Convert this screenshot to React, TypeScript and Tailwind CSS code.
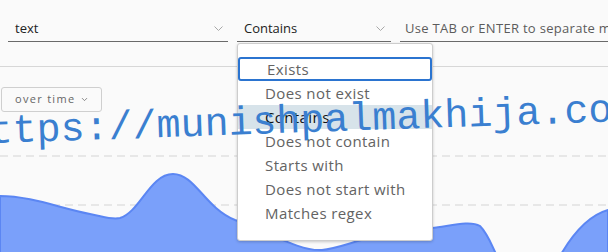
import { ChevronDown } from 'lucide-react';

const options = [
  'Exists',
  'Does not exist',
  'Contains',
  'Does not contain',
  'Starts with',
  'Does not start with',
  'Matches regex',
];

function Caret() {
  return (
    <svg width="9" height="5" viewBox="0 0 9 5" className="shrink-0">
      <path d="M0.5 0.5 L4.5 4.5 L8.5 0.5" fill="none" stroke="#a8a8a8" strokeWidth="1" />
    </svg>
  );
}

function Chart() {
  return (
    <svg width="608" height="140" viewBox="0 0 608 140" className="block">
      <line x1="0" y1="44" x2="608" y2="44" stroke="#d4d4d4" strokeWidth="1" strokeDasharray="8 5" />
      <line x1="0" y1="93" x2="608" y2="93" stroke="#d4d4d4" strokeWidth="1" strokeDasharray="8 5" />
      <path
        d="M0,84 C30,84 60,96 90,102 C105,105 112,108 120,106 C140,100 150,62 173,62 C195,62 205,96 235,108 C265,118 300,140 322,138 C345,136 370,120 432,116 C450,114 470,108 480,114 C488,122 492,134 497,144 L560,144 C575,118 590,103 608,98 L608,150 L0,150 Z"
        fill="#7aa0fa"
        stroke="#5b86f3"
        strokeWidth="2"
      />
    </svg>
  );
}

export default function App() {
  return (
    <div className="relative w-[608px] h-[252px] overflow-hidden bg-[#fafafa] font-['Open_Sans',sans-serif]">
      {/* filter row */}
      <div className="flex gap-[9px] pl-2 pt-4 h-[67px] border-b border-[#d7d7d7]">
        <div className="flex items-center justify-between w-[220px] h-[26px] border-b border-[#6a6a6a] pl-[7px] pr-[5px]">
          <span className="text-[13px] text-[#222]">text</span>
          <Caret />
        </div>
        <div className="flex items-center justify-between w-[154px] h-[26px] border-b border-[#6a6a6a] pl-[7px] pr-[6px]">
          <span className="text-[13px] text-[#222]">Contains</span>
          <Caret />
        </div>
        <div className="flex items-center flex-1 h-[26px] border-b border-[#6a6a6a] pl-[5px] whitespace-nowrap overflow-hidden">
          <span className="text-[13px] tracking-[0.3px] text-[#5c5c5c]">Use TAB or ENTER to separate multiple values</span>
        </div>
      </div>

      {/* chart panel */}
      <div className="pt-5">
        <button className="ml-px flex items-center gap-[5px] w-[101px] h-[25px] pl-[13px] border border-[#cfcfcf] rounded-[3px] text-[11px] tracking-[1.3px] text-[#666]">
          over time
          <ChevronDown size={9} strokeWidth={2} className="text-[#666]" />
        </button>
        <Chart />
      </div>

      {/* operator menu */}
      <div className="absolute left-[237px] top-[43px] z-10 w-[196px] h-[198px] bg-white border border-[#cdcdcd] rounded-[3px] shadow-[0_1px_3px_rgba(0,0,0,0.2)] pt-[13px]">
        {options.map((o, i) => (
          <div
            key={o}
            className={`h-[24px] flex items-center pl-[27px] text-[15px] tracking-[0.4px] ${
              i === 0 ? 'border-2 border-[#2b74d0] rounded-[3px] pl-[25px] text-[#636363]' : ''
            } ${i === 2 ? 'bg-[#d7e3ea] text-[#111]' : i !== 0 ? 'text-[#636363]' : ''}`}
          >
            {o}
          </div>
        ))}
      </div>

      {/* watermark */}
      <div className="absolute left-[-35px] top-[114px] z-20 pointer-events-none whitespace-nowrap font-['Liberation_Mono',monospace] text-[40px] leading-[40px] text-[#3a7fd0] rotate-[-2deg] origin-[0_30px]">
        https://munishpalmakhija.com
      </div>
    </div>
  );
}
